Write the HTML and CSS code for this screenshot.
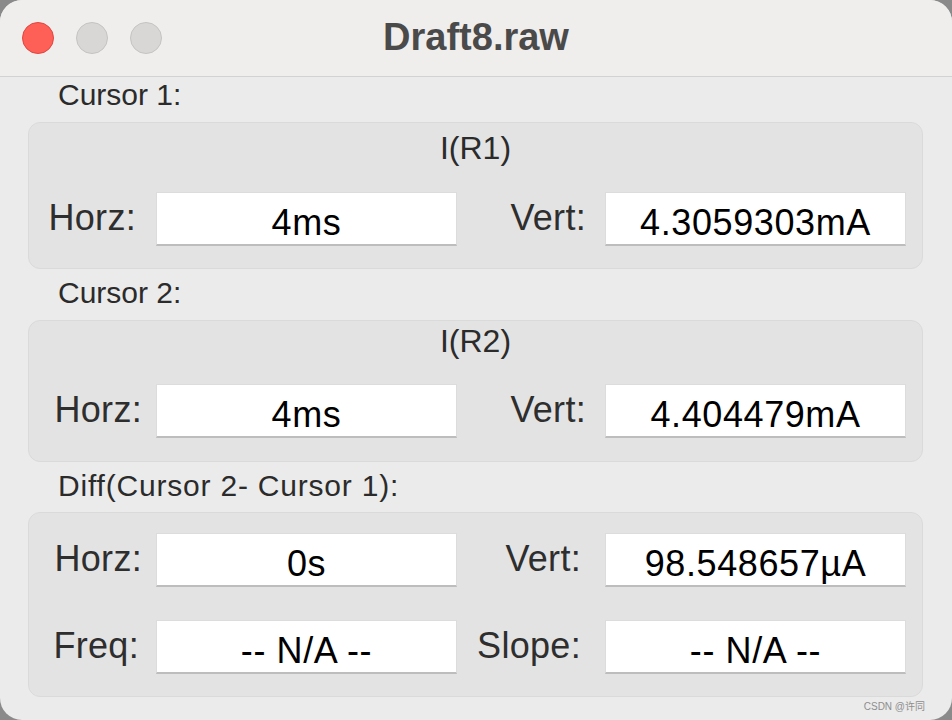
FILE: index.html
```html
<!DOCTYPE html>
<html>
<head>
<meta charset="utf-8">
<link rel="stylesheet" href="styles.css">
</head>
<body>
<div class="window">
  <div class="titlebar">
    <div class="lights">
      <span class="light close"></span>
      <span class="light"></span>
      <span class="light"></span>
    </div>
    <div class="title">Draft8.raw</div>
  </div>
  <div class="content">
    <div class="header first">Cursor 1:</div>
    <div class="box">
      <div class="trace">I(R1)</div>
      <div class="row">
        <div class="label l1">Horz:</div>
        <div class="field">4ms</div>
        <div class="label">Vert:</div>
        <div class="field">4.3059303mA</div>
      </div>
    </div>
    <div class="header">Cursor 2:</div>
    <div class="box box2">
      <div class="trace">I(R2)</div>
      <div class="row">
        <div class="label">Horz:</div>
        <div class="field">4ms</div>
        <div class="label">Vert:</div>
        <div class="field">4.404479mA</div>
      </div>
    </div>
    <div class="header diff">Diff(Cursor 2- Cursor 1):</div>
    <div class="box box3">
      <div class="row">
        <div class="label">Horz:</div>
        <div class="field">0s</div>
        <div class="label l3">Vert:</div>
        <div class="field">98.548657µA</div>
      </div>
      <div class="row">
        <div class="label l3f">Freq:</div>
        <div class="field">-- N/A --</div>
        <div class="label l3">Slope:</div>
        <div class="field">-- N/A --</div>
      </div>
    </div>
    <div class="watermark">CSDN @许同</div>
  </div>
</div>
</body>
</html>
```
FILE: styles.css
```css
html, body {
  margin: 0;
  padding: 0;
  background: #8a8a8a;
}
body {
  width: 952px;
  height: 720px;
  overflow: hidden;
  font-family: "Liberation Sans", Arial, "Noto Sans CJK SC", sans-serif;
}
.window {
  width: 952px;
  height: 720px;
  background: #ebebeb;
  border-radius: 22px;
  overflow: hidden;
  position: relative;
}
.titlebar {
  height: 76px;
  background: #efeeed;
  border-bottom: 1px solid #d3d2d1;
  display: flex;
  align-items: center;
  position: relative;
}
.lights {
  display: flex;
  gap: 22px;
  padding-left: 22px;
}
.light {
  width: 30px;
  height: 30px;
  border-radius: 50%;
  background: #d8d7d6;
  border: 1px solid #c4c3c2;
}
.light.close {
  background: #fe5f57;
  border-color: #e2463f;
}
.title {
  position: absolute;
  left: 0;
  right: 0;
  top: 16px;
  text-align: center;
  font-weight: bold;
  font-size: 38px;
  line-height: 42px;
  color: #4a4a4a;
}
.content {
  padding: 0 29px 0 28px;
  position: relative;
  height: 643px;
}
.header {
  font-size: 30px;
  line-height: 34px;
  color: #2b2b2b;
  padding: 7px 0 10px 30px;
}
.header.first {
  padding-top: 1px;
}
.header.diff {
  padding-bottom: 9px;
  letter-spacing: 0.8px;
}
.box {
  background: #e3e3e3;
  border: 1px solid #dadada;
  border-radius: 12px;
  padding: 5px 16px 22px 0;
}
.box2 {
  padding-top: 0;
  padding-bottom: 23px;
}
.box3 {
  padding-top: 20px;
  padding-bottom: 22px;
  display: flex;
  flex-direction: column;
  gap: 33px;
}
.trace {
  text-align: center;
  font-size: 32px;
  line-height: 40px;
  color: #2b2b2b;
  margin-bottom: 24px;
  padding-left: 16px;
}
.box2 .trace {
  margin-bottom: 23px;
}
.row {
  display: grid;
  grid-template-columns: 127px 301px 148px 301px;
  align-items: center;
}
.label {
  font-size: 36px;
  line-height: 40px;
  color: #2e2e2e;
  text-align: right;
  padding-right: 14px;
  padding-bottom: 3px;
  letter-spacing: 0.3px;
}
.row .label:nth-child(3) {
  padding-right: 19px;
}
.row .label.l1 {
  padding-right: 20px;
}
.row .label.l3:nth-child(3) {
  padding-right: 24px;
}
.row .label.l3f {
  padding-right: 17px;
}
.field {
  background: #ffffff;
  border: 1px solid #dcdcdc;
  border-bottom: 2px solid #bdbdbd;
  box-sizing: border-box;
  height: 54px;
  text-align: center;
  font-size: 36px;
  line-height: 54px;
  color: #000;
  padding-top: 3px;
  letter-spacing: 0.6px;
}
.watermark {
  position: absolute;
  right: 27px;
  bottom: 7px;
  font-size: 10px;
  color: #8e8e8e;
}
```
